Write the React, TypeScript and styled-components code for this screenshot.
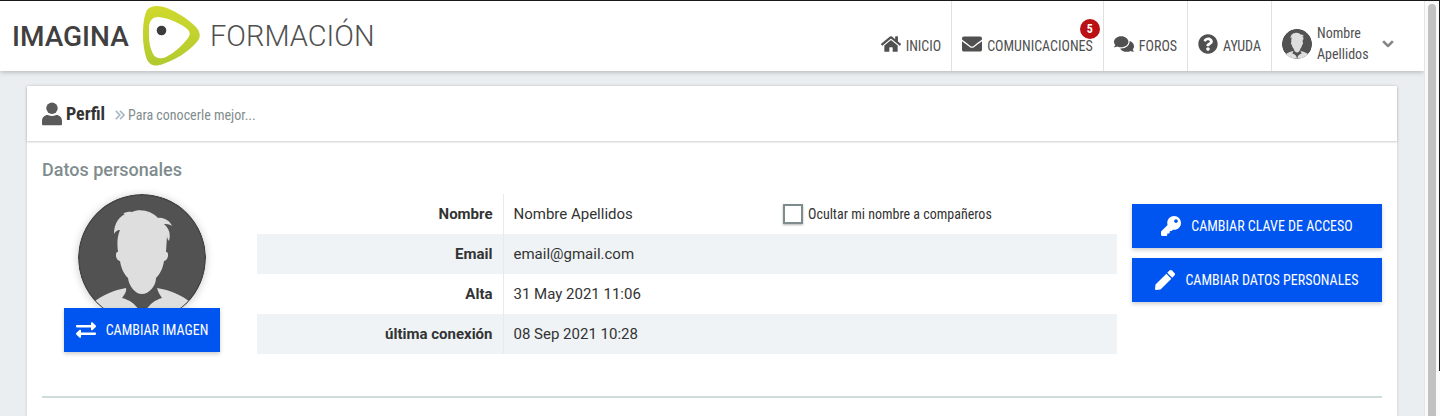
import React, { useId } from "react";
import styled, { createGlobalStyle } from "styled-components";
import {
  FaChevronDown,
  FaComments,
  FaEnvelope,
  FaExchangeAlt,
  FaHome,
  FaKey,
  FaPen,
  FaQuestionCircle,
} from "react-icons/fa";

const condensed = `"Roboto Condensed", "Liberation Sans Narrow", Roboto, sans-serif`;

const GlobalStyle = createGlobalStyle`
  *, *::before, *::after { box-sizing: border-box; }
  body {
    margin: 0;
    background: #eaeef1;
    color: #333;
    font-family: Roboto, sans-serif;
    font-size: 15px;
    line-height: 20px;
  }
`;

const Frame = styled.div`
  display: flex;
  height: 100vh;
  overflow: hidden;
  border-top: 1px solid #1c191d;
`;

const Page = styled.div`
  flex: 1;
  min-width: 0;
  display: flex;
  flex-direction: column;
`;

const ScrollTrack = styled.div`
  display: flex;
  width: 16px;
  padding: 3px 2px 0 3px;
  background: #fafafa;
  border-left: 1px solid #e4e4e4;
`;

const ScrollThumb = styled.div`
  width: 8px;
  border-radius: 4px 4px 0 0;
  background: #c1c1c1;
`;

const WindowEdge = styled.div`
  width: 1px;
  height: 370px;
  margin-left: -1px;
  background: #1c191d;
`;

const Header = styled.header`
  display: flex;
  justify-content: space-between;
  flex: none;
  height: 70px;
  padding-right: 20px;
  background: #fff;
  box-shadow: 0 1px 5px rgba(0, 0, 0, 0.25);
`;

const Brand = styled.a`
  display: flex;
  padding-left: 12px;
`;

const Nav = styled.nav`
  display: flex;
`;

const NavLink = styled.a`
  position: relative;
  display: flex;
  align-items: flex-end;
  gap: 5px;
  padding: 0 10px 16px;
  color: #505050;
  font-family: ${condensed};
  font-size: 14px;
  line-height: 18px;
  text-decoration: none;

  & + & {
    border-left: 1px solid #e0e0e0;
  }

  svg {
    width: 20px;
    height: 20px;
    margin-bottom: 1px;
  }
`;

const Badge = styled.span`
  position: absolute;
  top: 18px;
  right: 3px;
  width: 20px;
  border-radius: 50%;
  background: #b91114;
  color: #fff;
  font-size: 12px;
  font-weight: 700;
  line-height: 20px;
  text-align: center;
`;

const UserMenu = styled.button`
  display: flex;
  align-items: center;
  gap: 5px;
  padding: 16px 10px 0;
  border: 0;
  border-left: 1px solid #e0e0e0;
  background: none;
  color: #505050;
  font-family: ${condensed};
  font-size: 14px;
  line-height: 21px;
  text-align: left;
`;

const UserName = styled.span`
  width: 60px;
`;

const Main = styled.main`
  flex: 1;
  display: flex;
  padding: 15px 27px 0;
`;

const Panel = styled.article`
  flex: 1;
  background: #fff;
  box-shadow: 0 0 3px rgba(0, 0, 0, 0.15);
`;

const PanelHeader = styled.div`
  display: flex;
  align-items: center;
  height: 55px;
  padding: 0 15px;
  color: #555;
  font-family: ${condensed};
  box-shadow: 0 1px 2px rgba(0, 0, 0, 0.2);
`;

const Title = styled.h1`
  margin: 0 10px 0 4px;
  color: #333;
  font-size: 18px;
  font-weight: 700;
`;

const Subtitle = styled.span`
  display: flex;
  align-items: center;
  gap: 3px;
  padding-top: 3px;
  color: #7f8c8d;
  font-size: 14px;
`;

const Section = styled.section`
  padding: 18px 15px 0;
`;

const SectionTitle = styled.h2`
  margin: 0 0 14px;
  color: #7f8c8d;
  font-size: 18px;
  font-weight: 500;
  line-height: 21px;
`;

const Columns = styled.div`
  display: flex;
  gap: 15px;
  padding-bottom: 42px;
  border-bottom: 2px solid #cfdcdc;
`;

const Portrait = styled.div`
  display: flex;
  flex-direction: column;
  align-items: center;
  width: 200px;
`;

const Face = styled.svg<{ $shadow?: boolean }>`
  flex: none;
  border-radius: 50%;
  box-shadow: ${(p) => (p.$shadow ? "0 1px 8px rgba(0, 0, 0, 0.2)" : "none")};
`;

const Button = styled.button<{ $overlap?: boolean }>`
  display: flex;
  align-items: center;
  justify-content: center;
  gap: 10px;
  height: 44px;
  margin: ${(p) => (p.$overlap ? "-14px 0 0" : "0")};
  padding: 0 12px;
  z-index: 1;
  border: 0;
  background: #0055f1;
  box-shadow: 0 2px 4px rgba(0, 0, 0, 0.2);
  color: #fff;
  font-family: ${condensed};
  font-size: 14px;
  white-space: nowrap;
`;

const Actions = styled.div`
  display: flex;
  flex-direction: column;
  gap: 10px;
  width: 250px;
  padding-top: 10px;
`;

const DataTable = styled.table`
  flex: 1;
  table-layout: fixed;
  border-collapse: collapse;
  align-self: flex-start;

  tr {
    height: 40px;
  }

  tr:nth-child(even) {
    background: #eff3f6;
  }

  th,
  td {
    padding: 0 10px;
    text-align: left;
  }

  th {
    width: 246px;
    border-right: 1px solid #e6eaed;
    font-weight: 700;
    text-align: right;
  }
`;

const NameCell = styled.td`
  width: 270px;
`;

const CheckLabel = styled.label`
  display: flex;
  align-items: center;
  gap: 5px;
  font-family: ${condensed};
  font-size: 14px;
`;

const Checkbox = styled.input`
  appearance: none;
  width: 20px;
  height: 20px;
  margin: 0;
  border: 2px solid #7f8c8d;
  background: #fff;
  box-shadow: 0 1px 2px rgba(0, 0, 0, 0.3);
`;

function Avatar({ size, shadow }: { size: number; shadow?: boolean }) {
  const clip = useId();
  return (
    <Face $shadow={shadow} width={size} height={size} viewBox="0 0 128 128" aria-hidden="true">
      <clipPath id={clip}>
        <circle cx="64" cy="64" r="63" />
      </clipPath>
      <circle cx="64" cy="64" r="64" fill="#444" />
      <circle cx="64" cy="64" r="62.5" fill="#525252" />
      <g fill="#dedede" clipPath={`url(#${clip})`}>
        <path d="M36 40C36 32 39 24 47 20C43 20 49 17 54 18C62 14 74 17 80 24C86 23 92 27 94 32C91 30 88 30 86 30C91 34 93 40 91 47C90 46 89 44 89 42L88 58C91 57 91 66 86 67C85 74 82 80 78 84C78 92 71 100 64 100C57 100 51 92 50 84C46 80 43 74 42 67C37 66 37 57 40 58C39 50 39 43 42 36C39 36 37 38 36 40Z" />
        <path d="M14 109C25 101 36 96 48 94C49 98 46 101 44 104C52 106 57 110 61 116L64 128H14Z" />
        <path d="M114 109C103 101 92 96 79 94C80 98 82 101 84 104C77 106 72 110 68 116L64 128H114Z" />
      </g>
    </Face>
  );
}

function PersonIcon() {
  return (
    <svg width="20" height="24" viewBox="0 0 20 24" fill="#5a5a5a" aria-hidden="true">
      <circle cx="10" cy="6.200" r="5.700" />
      <path d="M0 22V19C0 15.500 2.500 13 5.800 13C8.500 14.200 11.500 14.200 14.200 13C17.500 13 20 15.500 20 19V22C20 22.800 19.500 23.300 18.700 23.300H1.300C0.500 23.300 0 22.800 0 22Z" />
    </svg>
  );
}

function DoubleChevron() {
  return (
    <svg width="10" height="10" viewBox="0 0 10 10" fill="none" stroke="#a9bac6" strokeWidth="1.700" aria-hidden="true">
      <path d="M0.800 0.900L4.800 5L0.800 9.100M5 0.900L9 5L5 9.100" />
    </svg>
  );
}

function Logo() {
  return (
    <svg width="368" height="70" viewBox="0 0 368 70" role="img" aria-label="Imagina Formación">
      <defs>
        <linearGradient id="lime" x1="0" y1="0" x2="0" y2="1">
          <stop offset="0" stopColor="#d0d92d" />
          <stop offset="1" stopColor="#b2ca30" />
        </linearGradient>
      </defs>
      <text x="0" y="45" fill="#404040" fontFamily="Roboto, sans-serif" fontSize="28" fontWeight="500">
        IMAGINA
      </text>
      <path
        fill="url(#lime)"
        fillRule="evenodd"
        d="M131 35C131 23 132 15 135 9C139 4 147 4 155 7C165 11 176 18 184 26C189 32 189 37 184 42C176 51 163 59 151 63C143 66 137 65 134 56C132 49 131 42 131 35ZM137 34C137 41 138 47 141 53C144 58 149 58 154 56C162 52 170 45 176 37C179 33 178 30 174 27C166 21 156 17 146 16C141 16 138 19 137 25C137 28 137 31 137 34Z"
      />
      <circle cx="149.500" cy="29.500" r="4.800" fill="#3c3c3c" />
      <text x="198" y="45" fill="#505050" fontFamily="Roboto, sans-serif" fontSize="29" fontWeight="300">
        FORMACIÓN
      </text>
    </svg>
  );
}

export default function App() {
  return (
    <>
      <GlobalStyle />
      <Frame>
        <Page>
          <Header>
            <Brand href="#">
              <Logo />
            </Brand>
            <Nav>
              <NavLink href="#"><FaHome />INICIO</NavLink>
              <NavLink href="#">
                <FaEnvelope />COMUNICACIONES
                <Badge>5</Badge>
              </NavLink>
              <NavLink href="#"><FaComments />FOROS</NavLink>
              <NavLink href="#"><FaQuestionCircle />AYUDA</NavLink>
              <UserMenu type="button">
                <Avatar size={30} />
                <UserName>Nombre<br />Apellidos</UserName>
                <FaChevronDown size={12} color="#808080" stroke="#808080" strokeWidth={36} />
              </UserMenu>
            </Nav>
          </Header>
          <Main>
            <Panel>
              <PanelHeader>
                <PersonIcon />
                <Title>Perfil</Title>
                <Subtitle><DoubleChevron />Para conocerle mejor...</Subtitle>
              </PanelHeader>
              <Section>
                <SectionTitle>Datos personales</SectionTitle>
                <Columns>
                  <Portrait>
                    <Avatar size={128} shadow />
                    <Button type="button" $overlap><FaExchangeAlt size={20} />CAMBIAR IMAGEN</Button>
                  </Portrait>
                  <DataTable>
                    <tbody>
                      <tr>
                        <th scope="row">Nombre</th>
                        <NameCell>Nombre Apellidos</NameCell>
                        <td>
                          <CheckLabel htmlFor="hide-name">
                            <Checkbox type="checkbox" id="hide-name" />
                            Ocultar mi nombre a compañeros
                          </CheckLabel>
                        </td>
                      </tr>
                      <tr>
                        <th scope="row">Email</th>
                        <td colSpan={2}>email@gmail.com</td>
                      </tr>
                      <tr>
                        <th scope="row">Alta</th>
                        <td colSpan={2}>31 May 2021 11:06</td>
                      </tr>
                      <tr>
                        <th scope="row">última conexión</th>
                        <td colSpan={2}>08 Sep 2021 10:28</td>
                      </tr>
                    </tbody>
                  </DataTable>
                  <Actions>
                    <Button type="button"><FaKey size={20} />CAMBIAR CLAVE DE ACCESO</Button>
                    <Button type="button"><FaPen size={20} />CAMBIAR DATOS PERSONALES</Button>
                  </Actions>
                </Columns>
              </Section>
            </Panel>
          </Main>
        </Page>
        <ScrollTrack>
          <ScrollThumb />
        </ScrollTrack>
        <WindowEdge />
      </Frame>
    </>
  );
}
